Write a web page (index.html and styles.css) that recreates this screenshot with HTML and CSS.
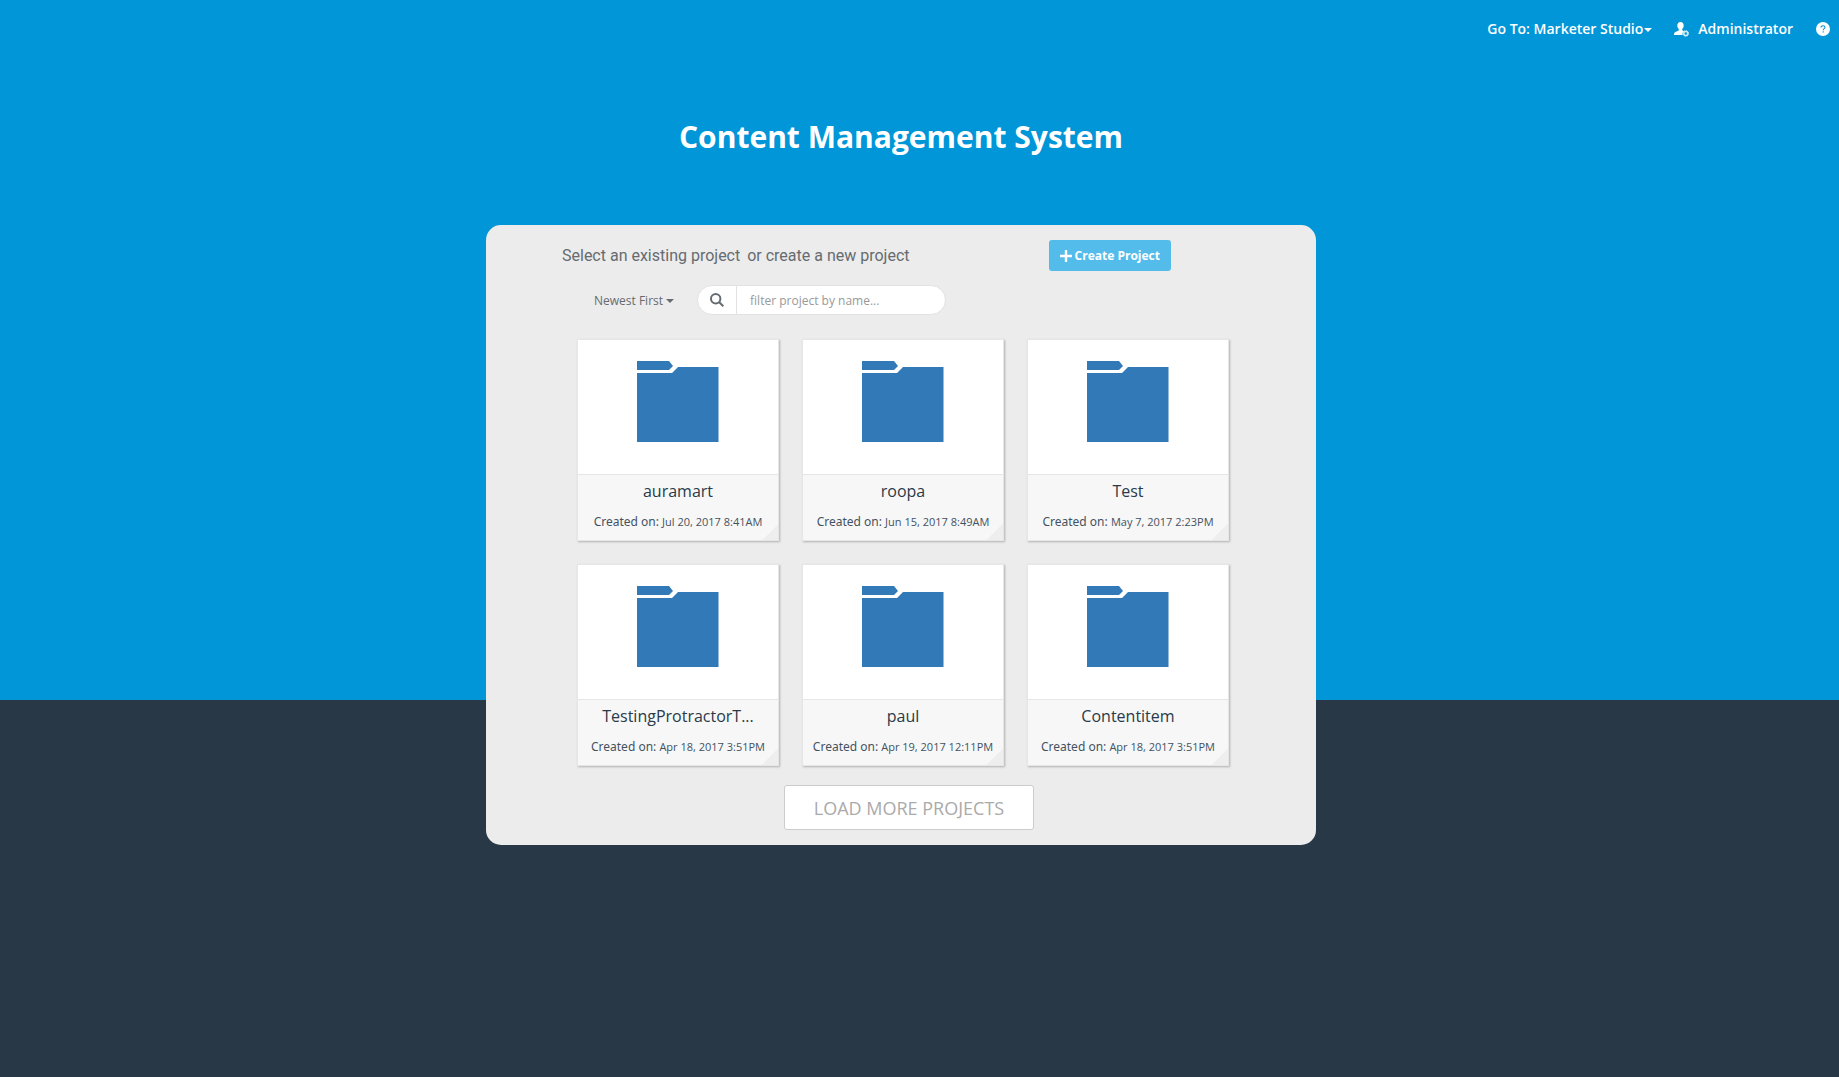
FILE: index.html
```html
<!DOCTYPE html>
<html lang="en">
<head>
<meta charset="utf-8">
<meta name="viewport" content="width=device-width, initial-scale=1">
<title>Content Management System</title>
<link rel="stylesheet" href="styles.css">
</head>
<body>
<svg class="sprite" aria-hidden="true">
  <symbol id="folder" viewBox="0 0 82 82">
    <path d="M0 0h32l4 5-4 4H0z"/>
    <path d="M41 6h40.500v75H0V12h35z"/>
  </symbol>
</svg>
<header class="topbar">
  <button class="topbar-item switcher" type="button">Go To: Marketer Studio<span class="caret"></span></button>
  <a class="topbar-item user" href="#">
    <svg class="user-icon" viewBox="0 0 15 15" aria-hidden="true">
      <path fill="#fff" d="M6.500 0C8.600 0 9.700 1.500 9.700 3.600c0 1.500-.6 2.700-1.500 3.500v1.200c.6.400 1.300.6 2 .9A3.500 3.500 0 0 0 8.500 13H0c0-1.800.3-2.600 1.500-3.100C3 9.300 4.200 8.900 4.800 8.300V7.100C3.900 6.300 3.300 5.100 3.300 3.600 3.300 1.500 4.400 0 6.500 0z"/>
      <circle cx="11.800" cy="11.500" r="2" fill="none" stroke="#d4edf9" stroke-width="1.500"/>
      <circle cx="11.800" cy="11.500" r="2.900" fill="none" stroke="#d4edf9" stroke-width=".8" stroke-dasharray="1.300 .98"/>
    </svg>
    Administrator</a>
  <a class="topbar-item help" href="#" aria-label="Help">
    <svg class="help-icon" viewBox="0 0 14 14" aria-hidden="true">
      <circle cx="7" cy="7" r="7" fill="#fff"/>
      <path d="M5 5.600C5 4.400 5.800 3.800 7 3.800s2 .7 2 1.600C9 6.700 7.200 6.600 7.200 8.300M7.200 9.300v1.200" fill="none" stroke="#0096d8" stroke-width="1.100"/>
    </svg>
  </a>
</header>
<main class="page">
  <h1 class="title">Content Management System</h1>
  <section class="panel">
    <div class="panel-head">
      <h2 class="prompt"><span class="prompt-lead">Select an existing project</span> or create a new project</h2>
      <button class="create" type="button">
        <svg class="plus" viewBox="0 0 12 12" aria-hidden="true"><path d="M6 0v12M0 6h12" stroke="#fff" stroke-width="2.400"/></svg>
        Create Project</button>
    </div>
    <div class="toolbar">
      <button class="sort" type="button">Newest First<span class="caret"></span></button>
      <div class="search">
        <label class="search-label" for="filter" aria-label="Filter projects">
          <svg class="search-icon" viewBox="0 0 14 14" aria-hidden="true"><g fill="none" stroke="#666b70" stroke-width="2"><circle cx="5.700" cy="5.700" r="4.700"/><path d="M9 9l4.300 4.300"/></g></svg>
        </label>
        <input class="search-input" id="filter" type="text" placeholder="filter project by name...">
      </div>
    </div>
    <div class="grid">
      <a class="card" href="#">
        <span class="cover"><svg class="folder"><use href="#folder"/></svg></span>
        <span class="info"><span class="name">auramart</span><span class="created">Created on: <span class="date">Jul 20, 2017 8:41AM</span></span></span>
      </a>
      <a class="card" href="#">
        <span class="cover"><svg class="folder"><use href="#folder"/></svg></span>
        <span class="info"><span class="name">roopa</span><span class="created">Created on: <span class="date">Jun 15, 2017 8:49AM</span></span></span>
      </a>
      <a class="card" href="#">
        <span class="cover"><svg class="folder"><use href="#folder"/></svg></span>
        <span class="info"><span class="name">Test</span><span class="created">Created on: <span class="date">May 7, 2017 2:23PM</span></span></span>
      </a>
      <a class="card" href="#">
        <span class="cover"><svg class="folder"><use href="#folder"/></svg></span>
        <span class="info"><span class="name">TestingProtractorT...</span><span class="created">Created on: <span class="date">Apr 18, 2017 3:51PM</span></span></span>
      </a>
      <a class="card" href="#">
        <span class="cover"><svg class="folder"><use href="#folder"/></svg></span>
        <span class="info"><span class="name">paul</span><span class="created">Created on: <span class="date">Apr 19, 2017 12:11PM</span></span></span>
      </a>
      <a class="card" href="#">
        <span class="cover"><svg class="folder"><use href="#folder"/></svg></span>
        <span class="info"><span class="name">Contentitem</span><span class="created">Created on: <span class="date">Apr 18, 2017 3:51PM</span></span></span>
      </a>
    </div>
    <button class="more" type="button">LOAD MORE PROJECTS</button>
  </section>
</main>
</body>
</html>
```
FILE: styles.css
```css
* {
  box-sizing: border-box;
}

body {
  margin: 0;
  min-height: 100vh;
  font-family: "Open Sans", "Noto Sans", sans-serif;
  font-size: 12px;
  color: #2a3a49;
  background: linear-gradient(#0096d8 65%, #293847 65%);
}

button {
  font-family: inherit;
  cursor: pointer;
}

a {
  color: inherit;
  text-decoration: none;
}

.sprite {
  display: none;
}

.caret {
  display: inline-block;
  margin-top: 2px;
  border: 4px solid transparent;
  border-top-color: currentColor;
  border-bottom: 0;
}

/* Top bar */

.topbar {
  display: flex;
  justify-content: flex-end;
  align-items: center;
  height: 58px;
  padding-right: 9px;
}

.topbar-item {
  display: flex;
  align-items: center;
  padding: 0;
  border: 0;
  background: none;
  color: #fff;
  font-size: 14px;
  font-weight: 600;
  line-height: 20px;
}

.switcher {
  gap: 1px;
}

.user {
  gap: 9px;
  margin: 0 23px 0 22px;
}

.user-icon {
  width: 15px;
  height: 15px;
}

.help-icon {
  width: 14px;
  height: 14px;
}

/* Page */

.page {
  display: flex;
  flex-direction: column;
  align-items: center;
  padding: 58px 37px 40px 0;
}

.title {
  margin: 0 0 67px;
  color: #fff;
  font-size: 30px;
  font-weight: 700;
  line-height: 42px;
}

.panel {
  display: flex;
  flex-direction: column;
  width: 100%;
  max-width: 830px;
  padding: 15px 87px 15px 76px;
  border-radius: 15px;
  background: #ececec;
}

.panel-head {
  display: flex;
  align-items: center;
  justify-content: space-between;
  padding-right: 58px;
}

.prompt {
  margin: 0;
  color: #666b70;
  font-family: Roboto, sans-serif;
  font-size: 16px;
  font-weight: 400;
}

.prompt-lead {
  margin-right: 3px;
}

.create {
  display: flex;
  align-items: center;
  gap: 3px;
  height: 31px;
  padding: 0 11px;
  border: 0;
  border-radius: 3px;
  background: #53bceb;
  color: #fff;
  font-size: 12px;
  font-weight: 700;
}

.plus {
  width: 12px;
  height: 12px;
}

.toolbar {
  display: flex;
  align-items: center;
  gap: 23px;
  margin: 14px 0 24px 32px;
}

.sort {
  display: flex;
  align-items: center;
  gap: 3px;
  padding: 0;
  border: 0;
  background: none;
  color: #666b70;
  font-size: 12px;
}

.search {
  display: flex;
  width: 249px;
  height: 30px;
  overflow: hidden;
  border: 1px solid #e2e2e2;
  border-radius: 15px;
  background: #fff;
}

.search-label {
  display: flex;
  align-items: center;
  justify-content: center;
  width: 39px;
  border-right: 1px solid #e2e2e2;
}

.search-icon {
  width: 14px;
  height: 14px;
}

.search-input {
  flex: 1;
  min-width: 0;
  padding: 0 13px;
  border: 0;
  outline: 0;
  background: none;
  font-family: inherit;
  font-size: 12px;
}

.search-input::placeholder {
  color: #999;
}

/* Project cards */

.grid {
  display: grid;
  grid-template-columns: repeat(auto-fit, 202px);
  gap: 23px;
  padding-left: 15px;
}

.card {
  display: flex;
  flex-direction: column;
  border: 1px solid #e4e6e8;
  background: #fff;
  box-shadow: 1px 1px 2px rgba(0, 0, 0, 0.25);
}

.cover {
  display: flex;
  justify-content: center;
  height: 134px;
  padding-top: 21px;
}

.folder {
  width: 82px;
  height: 82px;
  fill: #3279b7;
}

.info {
  display: flex;
  flex-direction: column;
  align-items: center;
  gap: 11px;
  height: 66px;
  padding-top: 5px;
  border-top: 1px solid #e4e6e8;
  background: linear-gradient(135deg, transparent 50%, #eee 50%) right bottom / 16px 16px no-repeat #f7f7f7;
}

.name {
  font-size: 16px;
  font-weight: 500;
  line-height: 22px;
}

.created {
  color: #44525f;
  font-family: "Noto Sans", sans-serif;
  font-size: 12px;
  line-height: 18px;
  white-space: nowrap;
}

.date {
  font-family: "Open Sans", sans-serif;
  font-size: 11px;
}

.more {
  align-self: center;
  height: 45px;
  margin: 19px 0 0 27px;
  padding: 0 29px;
  border: 1px solid #ccc;
  border-radius: 3px;
  background: #fff;
  color: #aaa;
  font-size: 18px;
}
```
